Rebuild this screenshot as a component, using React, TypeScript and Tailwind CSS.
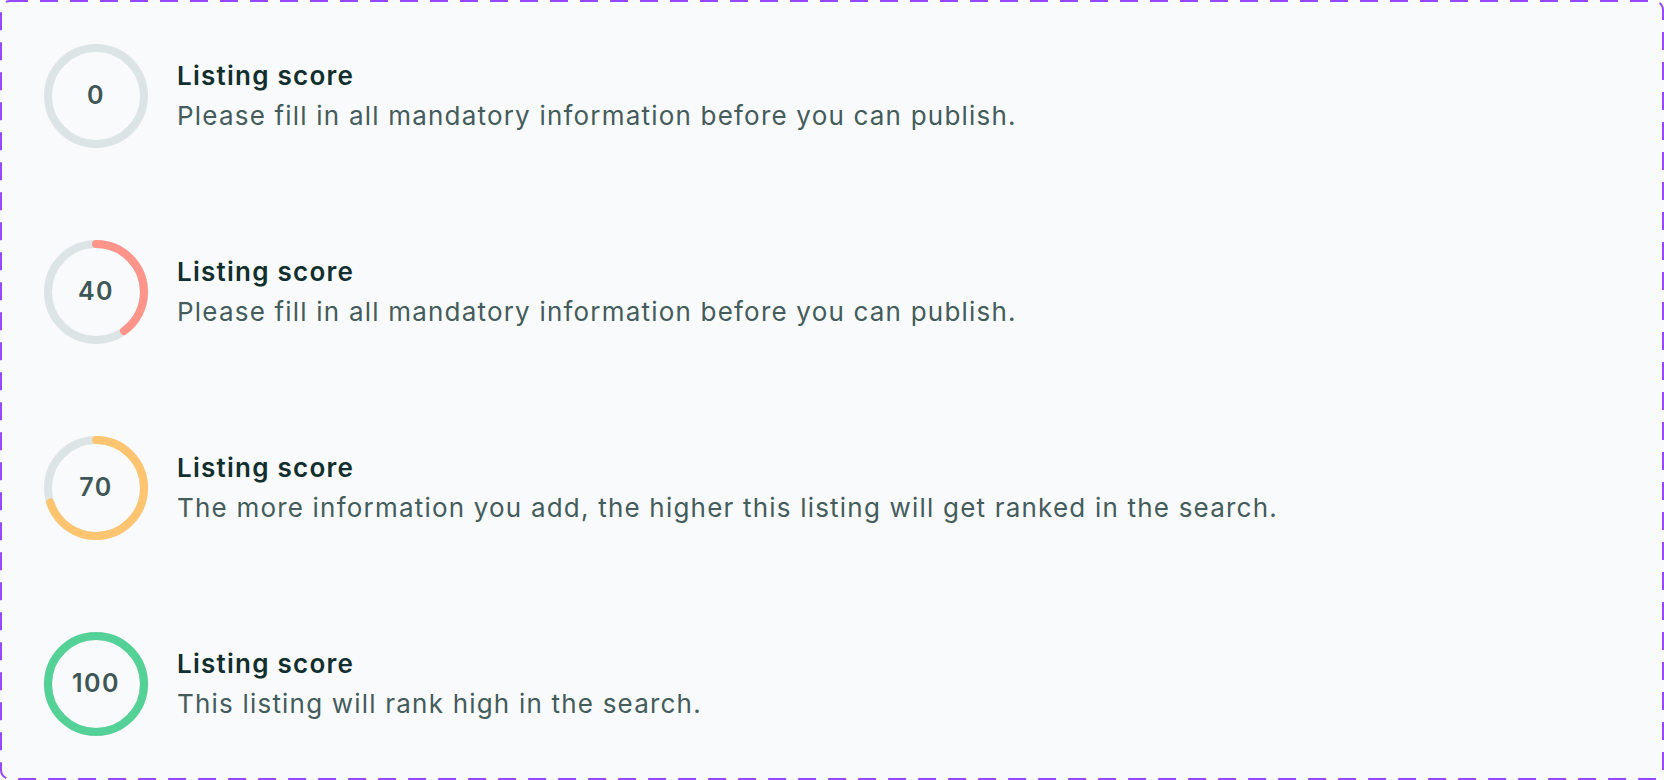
import React from 'react';

type ScoreRow = {
  score: number;
  color: string;
  message: string;
};

const rows: ScoreRow[] = [
  { score: 0, color: '#dce4e6', message: 'Please fill in all mandatory information before you can publish.' },
  { score: 40, color: '#ff958a', message: 'Please fill in all mandatory information before you can publish.' },
  { score: 70, color: '#ffc46f', message: 'The more information you add, the higher this listing will get ranked in the search.' },
  { score: 100, color: '#54d196', message: 'This listing will rank high in the search.' },
];

const ScoreRing = ({ score, color }: { score: number; color: string }) => {
  const r = 48;
  const circumference = 2 * Math.PI * r;
  const dash = (score / 100) * circumference;

  return (
    <div className="relative w-[104px] h-[104px] shrink-0">
      <svg width="104" height="104" viewBox="0 0 104 104" className="-rotate-90">
        <circle cx="52" cy="52" r={r} fill="none" stroke="#dce4e6" strokeWidth="8" />
        {score > 0 && (
          <circle
            cx="52"
            cy="52"
            r={r}
            fill="none"
            stroke={color}
            strokeWidth="8"
            strokeLinecap={score >= 100 ? 'butt' : 'round'}
            strokeDasharray={`${dash} ${circumference}`}
          />
        )}
      </svg>
      <span className="absolute inset-0 flex items-center justify-center text-[25px] tracking-[1.4px] font-semibold text-[#3e5655]">
        {score}
      </span>
    </div>
  );
};

export default function App() {
  return (
    <div className="w-[1664px] h-[780px] bg-white font-['Inter',sans-serif]">
      <div className="relative w-full h-full rounded-[10px] bg-[#f8fafc] px-[44px] py-[44px] flex flex-col gap-[92px]">
        {/* dashed frame */}
        <svg className="absolute inset-0 pointer-events-none" width="1664" height="780">
          <rect
            x="1"
            y="1"
            width="1662"
            height="778"
            rx="9"
            fill="none"
            stroke="#9747ff"
            strokeWidth="2"
            strokeDasharray="18 12"
          />
        </svg>

        {rows.map((row) => (
          <div key={row.score} className="flex items-center gap-[29px]">
            <ScoreRing score={row.score} color={row.color} />
            <div className="flex flex-col">
              <p className="text-[26px] leading-[40px] tracking-[1.25px] font-semibold text-[#112f2e]">Listing score</p>
              <p className="text-[26px] leading-[40px] tracking-[1.2px] text-[#445c5b]">{row.message}</p>
            </div>
          </div>
        ))}
      </div>
    </div>
  );
}
